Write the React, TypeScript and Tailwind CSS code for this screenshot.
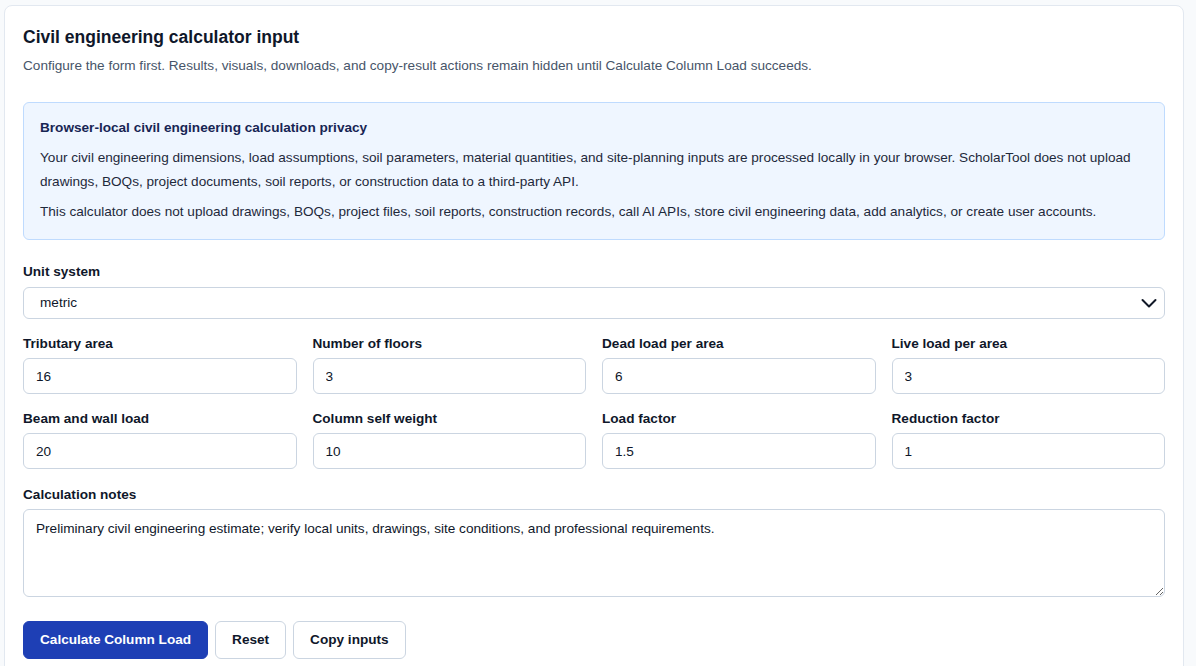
import { useState } from "react";

const fields: { label: string; value: string }[] = [
  { label: "Tributary area", value: "16" },
  { label: "Number of floors", value: "3" },
  { label: "Dead load per area", value: "6" },
  { label: "Live load per area", value: "3" },
  { label: "Beam and wall load", value: "20" },
  { label: "Column self weight", value: "10" },
  { label: "Load factor", value: "1.5" },
  { label: "Reduction factor", value: "1" },
];

const defaultNotes =
  "Preliminary civil engineering estimate; verify local units, drawings, site conditions, and professional requirements.";

export default function App() {
  const [values, setValues] = useState(fields.map((f) => f.value));
  const [unit, setUnit] = useState("metric");
  const [notes, setNotes] = useState(defaultNotes);

  return (
    <div className="min-h-screen bg-[#f8fafc] pl-1 pr-[12px] pt-[5px] font-['Liberation_Sans',Arial,sans-serif] text-[#0f172a]">
      <div className="rounded-lg border border-[#e2e8f0] bg-white px-[18px] pb-6 pt-[19px]">
        {/* Header */}
        <h2 className="text-[17.5px] font-bold leading-6 text-[#0f172a]">Civil engineering calculator input</h2>
        <p className="mt-[7px] text-[13.6px] leading-5 text-[#475569]">
          Configure the form first. Results, visuals, downloads, and copy-result actions remain hidden until Calculate
          Column Load succeeds.
        </p>

        {/* Privacy note */}
        <div className="mt-[26px] rounded-md border border-[#bfdbfe] bg-[#eff6ff] px-4 pb-[15px] pt-[15px]">
          <h3 className="text-[13.6px] font-bold leading-5 text-[#172554]">
            Browser-local civil engineering calculation privacy
          </h3>
          <p className="mt-2 text-[13.6px] leading-6 text-[#1e293b]">
            Your civil engineering dimensions, load assumptions, soil parameters, material quantities, and site-planning
            inputs are processed locally in your browser. ScholarTool does not upload drawings, BOQs, project documents,
            soil reports, or construction data to a third-party API.
          </p>
          <p className="mt-[6px] text-[13.6px] leading-6 text-[#1e293b]">
            This calculator does not upload drawings, BOQs, project files, soil reports, construction records, call AI
            APIs, store civil engineering data, add analytics, or create user accounts.
          </p>
        </div>

        {/* Unit system */}
        <label className="mt-[23px] block">
          <span className="block text-[13.6px] font-bold leading-[18px] text-[#0f172a]">Unit system</span>
          <div className="relative mt-[6px]">
            <select
              value={unit}
              onChange={(e) => setUnit(e.target.value)}
              className="h-8 w-full appearance-none rounded-md border border-[#cbd5e1] bg-white pl-4 pr-10 text-[13.6px] text-[#0f172a] outline-none"
            >
              <option value="metric">metric</option>
              <option value="imperial">imperial</option>
            </select>
            <svg
              className="pointer-events-none absolute right-[8px] top-1/2 -translate-y-1/2"
              width="16"
              height="16"
              viewBox="0 0 16 16"
              fill="none"
              stroke="#111827"
              strokeWidth="2"
              strokeLinecap="round"
              strokeLinejoin="round"
            >
              <path d="M1.5 5 8 11.5 14.5 5" />
            </svg>
          </div>
        </label>

        {/* Inputs grid */}
        <div className="mt-4 grid grid-cols-4 gap-x-4 gap-y-4">
          {fields.map((f, i) => (
            <label key={f.label} className="block">
              <span className="block text-[13.6px] font-bold leading-[18px] text-[#0f172a]">{f.label}</span>
              <input
                value={values[i]}
                onChange={(e) => setValues((v) => v.map((x, j) => (j === i ? e.target.value : x)))}
                className="mt-[5px] h-9 w-full rounded-md border border-[#cbd5e1] bg-white px-3 text-[13.6px] text-[#0f172a] outline-none"
              />
            </label>
          ))}
        </div>

        {/* Notes */}
        <label className="mt-[17px] block">
          <span className="block text-[13.6px] font-bold leading-[18px] text-[#0f172a]">Calculation notes</span>
          <textarea
            value={notes}
            onChange={(e) => setNotes(e.target.value)}
            className="mt-[5px] block h-[88px] w-full rounded-md border border-[#cbd5e1] bg-white px-3 py-[9px] text-[13.6px] leading-5 text-[#0f172a] outline-none"
          />
        </label>

        {/* Actions */}
        <div className="mt-[24px] flex items-center gap-[7px]">
          <button className="h-[38px] rounded-md border border-[#1e3fb5] bg-[#1e3fb5] px-4 text-[13.6px] font-bold text-white">
            Calculate Column Load
          </button>
          <button className="h-[38px] rounded-md border border-[#cbd5e1] bg-white px-4 text-[13.6px] font-bold text-[#0f172a]">
            Reset
          </button>
          <button className="h-[38px] rounded-md border border-[#cbd5e1] bg-white px-4 text-[13.6px] font-bold text-[#0f172a]">
            Copy inputs
          </button>
        </div>
      </div>
    </div>
  );
}
